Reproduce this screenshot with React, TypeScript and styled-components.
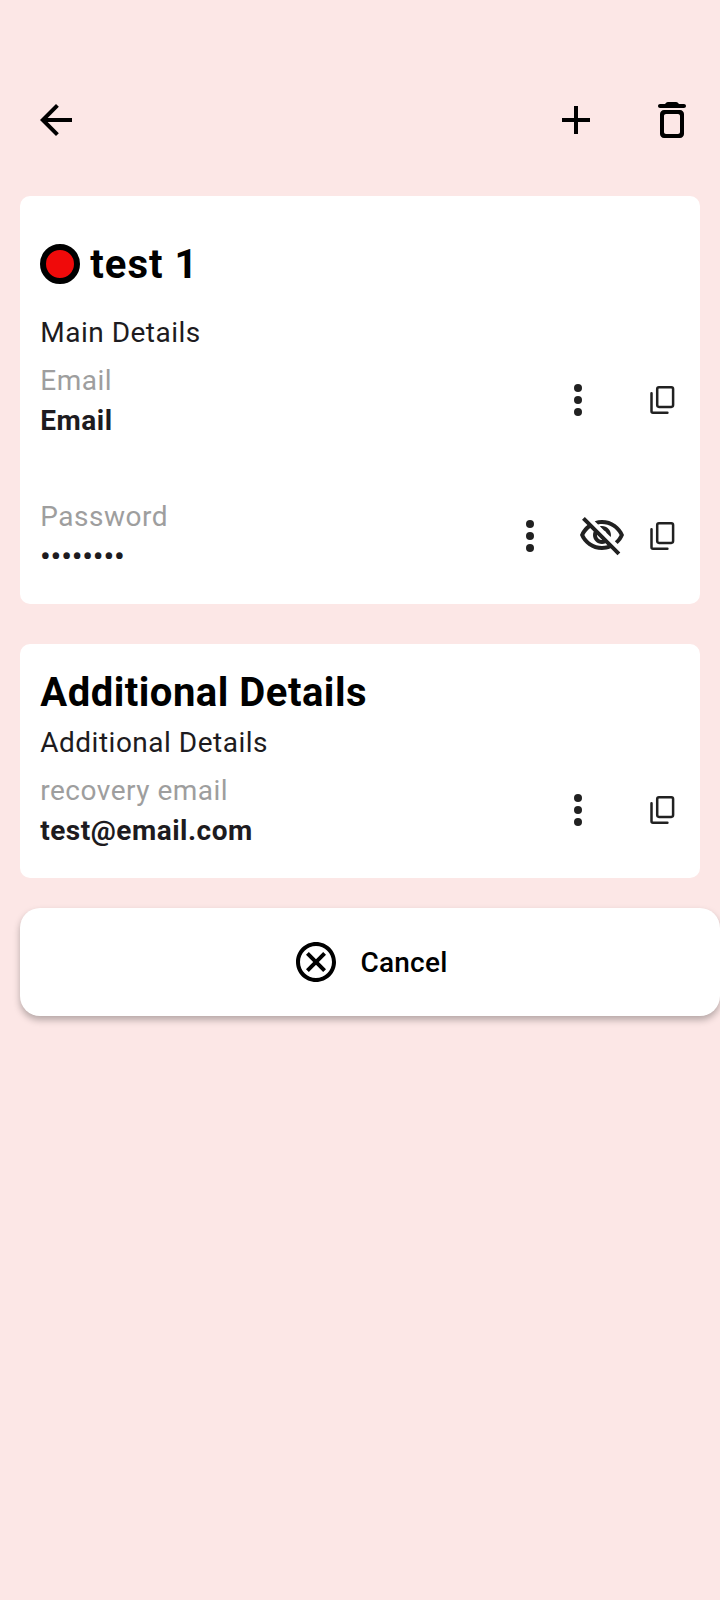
import React from "react";
import styled, { createGlobalStyle } from "styled-components";

const GlobalStyle = createGlobalStyle`
  * { box-sizing: border-box; }
  body {
    margin: 0;
    background: #fce7e6;
    font-family: Roboto, "Liberation Sans", sans-serif;
    color: #1d1b20;
    overflow-x: hidden;
  }
`;

const Screen = styled.main`
  width: 720px;
  height: 1600px;
  padding-top: 64px;
  overflow: hidden;
`;

const AppBar = styled.header`
  height: 112px;
  padding: 0 24px 0 32px;
  display: flex;
  align-items: center;
  gap: 48px;
  color: #000;
`;

const Spacer = styled.div`
  flex: 1;
`;

const IconButton = styled.button<{ $width?: number }>`
  width: ${(p) => p.$width ?? 48}px;
  height: 48px;
  padding: 0;
  border: 0;
  background: none;
  color: inherit;
  display: flex;
  align-items: center;
  justify-content: center;
  flex: none;
`;

const Icon = styled.svg`
  width: 48px;
  height: 48px;
  fill: currentColor;
  flex: none;
`;

const Card = styled.section<{ $top: number; $gap: number }>`
  margin: ${(p) => p.$gap}px 20px 0;
  padding: ${(p) => p.$top}px 20px 28px;
  background: #fff;
  border-radius: 10px;
`;

const TitleRow = styled.div`
  display: flex;
  align-items: center;
  gap: 10px;
`;

const ColorDot = styled.span`
  width: 40px;
  height: 40px;
  border: 6px solid #000;
  border-radius: 50%;
  background: #f00a0a;
`;

const Title = styled.h1<{ $tracking?: number }>`
  margin: 0;
  padding: 2px 0 0 0.25px;
  font-size: 40px;
  line-height: 56px;
  font-weight: 700;
  letter-spacing: ${(p) => p.$tracking ?? 0.5}px;
  color: #000;
`;

const Subtitle = styled.p<{ $gap: number }>`
  margin: ${(p) => p.$gap}px 0 7px;
  padding-left: 0.25px;
  font-size: 28px;
  line-height: 40px;
  letter-spacing: 0.5px;
`;

const FieldRow = styled.div<{ $gap?: number }>`
  display: flex;
  align-items: center;
  height: 80px;
  margin-top: ${(p) => p.$gap ?? 0}px;
`;

const FieldText = styled.div`
  flex: 1;
  padding: 2px 0 0 0.25px;
  font-size: 28px;
  line-height: 40px;
  letter-spacing: 0.5px;
`;

const Label = styled.div`
  color: #9e9e9e;
`;

const Value = styled.div`
  font-weight: 700;
`;

const Actions = styled.div<{ $gap: number }>`
  display: flex;
  align-items: center;
  gap: ${(p) => p.$gap}px;
  margin-right: -6px;
  color: #212121;
`;

const CancelButton = styled.button`
  width: 700px;
  height: 108px;
  margin: 30px 0 0 20px;
  padding: 0;
  border: 0;
  border-radius: 20px;
  background: #fff;
  box-shadow: 0 4px 7px rgba(0, 0, 0, 0.28);
  display: flex;
  align-items: center;
  justify-content: center;
  gap: 20px;
  color: #000;
  font: 500 28px/40px Roboto, "Liberation Sans", sans-serif;
  letter-spacing: 0.25px;
`;

const CancelLabel = styled.span`
  padding-top: 2px;
`;

const MoreIcon = () => (
  <Icon viewBox="0 0 24 24">
    <circle cx="12" cy="6" r="2" />
    <circle cx="12" cy="12" r="2" />
    <circle cx="12" cy="18" r="2" />
  </Icon>
);

const CopyIcon = () => (
  <Icon viewBox="0 0 48 48">
    <g fill="none" stroke="currentColor" strokeWidth="2.5" strokeLinecap="round">
      <rect x="19.2" y="11.2" width="15.9" height="19.7" rx="1.8" />
      <path d="M13.5 17.2V35.2q0 1.5 1.5 1.5H29.4" />
    </g>
  </Icon>
);

const EyeOffIcon = () => (
  <Icon viewBox="0 0 24 24">
    <path d="M12 6c3.79 0 7.17 2.13 8.82 5.5-.59 1.22-1.42 2.27-2.41 3.12l1.41 1.41c1.39-1.23 2.49-2.77 3.18-4.53C21.27 7.11 17 4 12 4c-1.27 0-2.49.2-3.64.57l1.65 1.65C10.66 6.09 11.32 6 12 6zm-1.07 1.14L13 9.21c.57.25 1.03.71 1.28 1.28l2.07 2.07c.08-.34.14-.7.14-1.07C16.5 9.01 14.48 7 12 7c-.37 0-.72.05-1.07.14zM2.01 3.87l2.68 2.68C3.06 7.83 1.77 9.53 1 11.5 2.73 15.89 7 19 12 19c1.52 0 2.98-.29 4.32-.82l3.42 3.42 1.41-1.41L3.42 2.45 2.01 3.87zm7.5 7.5l2.61 2.61c-.04.01-.08.02-.12.02-1.38 0-2.5-1.12-2.5-2.5 0-.05.01-.08.01-.13zm-3.4-3.4l1.75 1.75c-.23.55-.36 1.15-.36 1.78 0 2.48 2.02 4.5 4.5 4.5.63 0 1.23-.13 1.77-.36l.98.98c-.88.24-1.8.38-2.75.38-3.79 0-7.17-2.13-8.82-5.5.7-1.43 1.72-2.61 2.93-3.53z" />
  </Icon>
);

interface FieldProps {
  label: string;
  value: string;
  gap?: number;
  secret?: boolean;
}

function Field({ label, value, gap, secret }: FieldProps) {
  return (
    <FieldRow $gap={gap}>
      <FieldText>
        <Label>{label}</Label>
        <Value>{value}</Value>
      </FieldText>
      <Actions $gap={secret ? 12 : 36}>
        <IconButton $width={secret ? 72 : 48} aria-label="More">
          <MoreIcon />
        </IconButton>
        {secret && (
          <IconButton aria-label="Show password">
            <EyeOffIcon />
          </IconButton>
        )}
        <IconButton aria-label="Copy">
          <CopyIcon />
        </IconButton>
      </Actions>
    </FieldRow>
  );
}

export default function App() {
  return (
    <>
      <GlobalStyle />
      <Screen>
        <AppBar>
          <IconButton aria-label="Back">
            <Icon viewBox="0 0 24 24">
              <path d="M20 11H7.83l5.59-5.59L12 4l-8 8 8 8 1.41-1.41L7.83 13H20v-2z" />
            </Icon>
          </IconButton>
          <Spacer />
          <IconButton aria-label="Add">
            <Icon viewBox="0 0 24 24">
              <path d="M19 13h-6v6h-2v-6H5v-2h6V5h2v6h6v2z" />
            </Icon>
          </IconButton>
          <IconButton aria-label="Delete">
            <Icon viewBox="0 0 24 24">
              <path d="M6 19c0 1.1.9 2 2 2h8c1.1 0 2-.9 2-2V9c0-1.1-.9-2-2-2H8c-1.1 0-2 .9-2 2v10zM9 9h6c.55 0 1 .45 1 1v8c0 .55-.45 1-1 1H9c-.55 0-1-.45-1-1v-8c0-.55.45-1 1-1zm6.5-5l-.71-.71c-.18-.18-.44-.29-.7-.29H9.91c-.26 0-.52.11-.7.29L8.5 4H6c-.55 0-1 .45-1 1s.45 1 1 1h12c.55 0 1-.45 1-1s-.45-1-1-1h-2.5z" />
            </Icon>
          </IconButton>
        </AppBar>
        <Card $gap={20} $top={39}>
          <TitleRow>
            <ColorDot />
            <Title $tracking={1}>test 1</Title>
          </TitleRow>
          <Subtitle $gap={20}>Main Details</Subtitle>
          <Field label="Email" value="Email" />
          <Field label="Password" value="••••••••" gap={56} secret />
        </Card>
        <Card $gap={40} $top={19}>
          <Title>Additional Details</Title>
          <Subtitle $gap={2}>Additional Details</Subtitle>
          <Field label="recovery email" value="test@email.com" />
        </Card>
        <CancelButton>
          <Icon viewBox="0 0 24 24">
            <path d="M12 2C6.47 2 2 6.47 2 12s4.47 10 10 10 10-4.47 10-10S17.53 2 12 2zm0 18c-4.41 0-8-3.59-8-8s3.59-8 8-8 8 3.59 8 8-3.59 8-8 8zm3.59-13L12 10.59 8.41 7 7 8.41 10.59 12 7 15.59 8.41 17 12 13.41 15.59 17 17 15.59 13.41 12 17 8.41z" />
          </Icon>
          <CancelLabel>Cancel</CancelLabel>
        </CancelButton>
      </Screen>
    </>
  );
}
